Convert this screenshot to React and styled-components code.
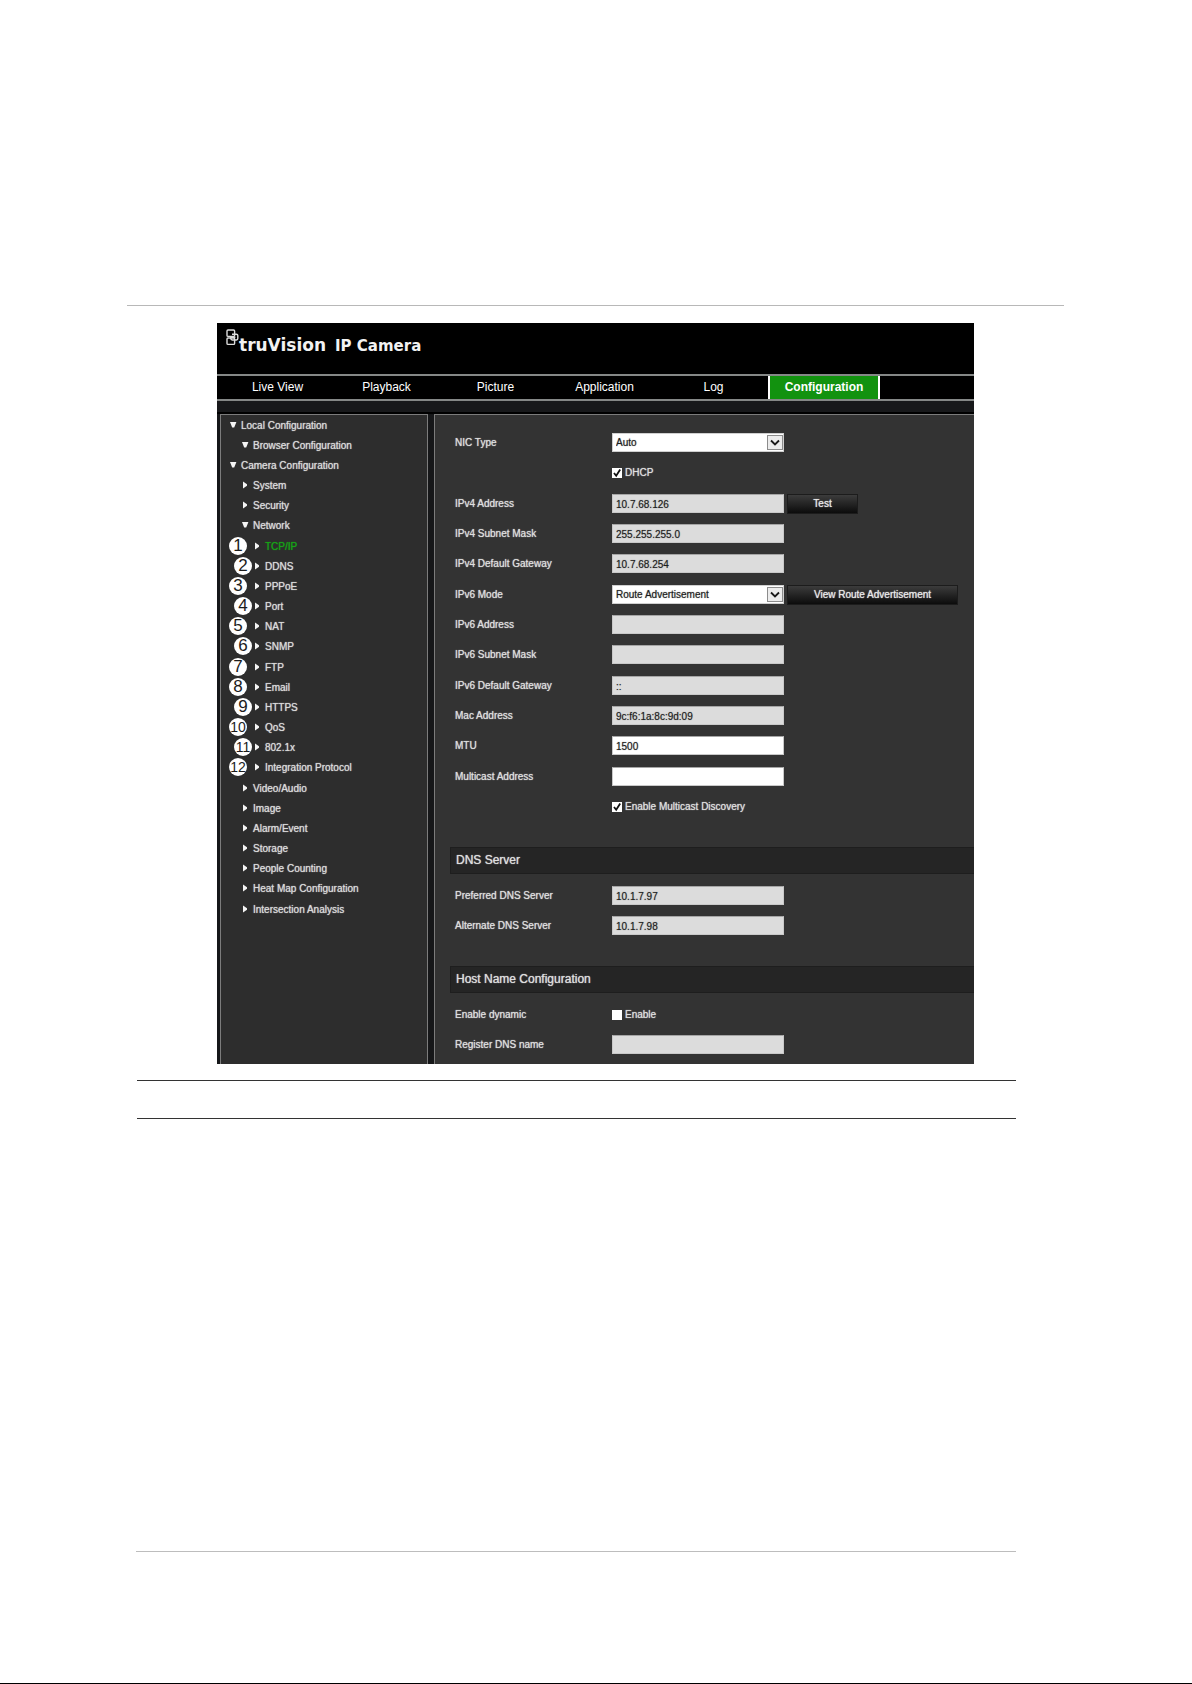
import React from 'react';
import styled, { createGlobalStyle } from 'styled-components';

const PANEL_BORDER = '#7c7c7c';
const NAV_LINE = '#858887';

const GlobalStyle = createGlobalStyle`
  body {
    margin: 0;
    background: #ffffff;
    font-family: 'Liberation Sans', Arial, sans-serif;
  }

  *, *::before, *::after {
    box-sizing: border-box;
  }
`;

const Page = styled.div`
  display: flex;
  flex-direction: column;
  min-height: 100vh;
  padding: 305px 128px 0 127px;
  border-bottom: 1px solid #000000;
`;

const TopRule = styled.hr`
  width: 100%;
  height: 1px;
  margin: 0 0 17px;
  border: 0;
  background: #b8b8b8;
`;

const CaptionRules = styled.div`
  height: 39px;
  margin: 16px 48px 0 10px;
  border-top: 1px solid #333333;
  border-bottom: 1px solid #333333;
`;

const FooterRule = styled.hr`
  width: calc(100% - 57px);
  height: 1px;
  margin: auto 48px 131px 9px;
  border: 0;
  background: #bdbdbd;
`;

const Window = styled.div`
  width: 100%;
  max-width: 757px;
  margin: 0 auto;
  background: #000000;
  color: #dedede;
`;

const Header = styled.header`
  display: flex;
  align-items: flex-start;
  height: 51px;
  padding: 6px 9px;
`;

const LogoMark = styled.svg`
  width: 13px;
  height: 17px;
  flex: none;
`;

const Brand = styled.div`
  display: flex;
  align-items: baseline;
  gap: 9px;
  padding-top: 6px;
  color: #f2f2f2;
  font-family: 'DejaVu Sans', sans-serif;
  font-weight: bold;
  line-height: 20px;
  white-space: nowrap;
`;

const BrandName = styled.span`
  font-size: 17px;
`;

const BrandProduct = styled.span`
  font-size: 15px;
`;

const Nav = styled.nav`
  display: flex;
  height: 27px;
  padding-left: 6px;
  border-top: 2px solid ${NAV_LINE};
  border-bottom: 2px solid ${NAV_LINE};
`;

const NavLink = styled.a`
  width: ${props => (props.$active ? '112px' : '109px')};
  border: solid #ffffff;
  border-width: ${props => (props.$active ? '0 2px' : '0')};
  background: ${props => (props.$active ? '#12920f' : 'transparent')};
  color: #ffffff;
  font-size: 12px;
  font-weight: ${props => (props.$active ? 'bold' : 'normal')};
  line-height: 23px;
  text-align: center;
  text-decoration: none;
`;

const Strip = styled.div`
  height: 11px;
  background: #18191b;
`;

const Body = styled.div`
  display: flex;
  gap: 6px;
  padding: 2px 0 0 3px;
  background: linear-gradient(#000000 2px, #161719 2px);
`;

const Sidebar = styled.aside`
  flex: 0 0 208px;
  border: 1px solid ${PANEL_BORDER};
  border-bottom: 0;
  background: #2d2d2d;
`;

const Tree = styled.ul`
  margin: 0;
  padding: 0;
  list-style: none;
`;

const TreeRow = styled.li`
  position: relative;
  height: 20px;
  padding-left: ${props => 9 + props.$level * 12}px;

  &:nth-child(6n) {
    height: 21px;
  }
`;

const TreeLink = styled.a`
  display: flex;
  align-items: center;
  gap: 4px;
  height: 20px;
  color: ${props => (props.$active ? '#17a317' : '#dadada')};
  font-size: 10px;
  text-decoration: none;
  text-shadow: 0 0 1px currentColor;
  white-space: nowrap;
`;

const Arrow = styled.svg`
  width: 7px;
  height: 8px;
  fill: #f4f4f4;
`;

const Badge = styled.span`
  position: absolute;
  top: 1px;
  left: ${props => (props.$shifted ? '13px' : '8px')};
  width: 18px;
  height: 18px;
  border-radius: 50%;
  background: #ffffff;
  color: #1c1c1c;
  font-size: ${props => (props.$small ? '14px' : '17px')};
  line-height: 18px;
  text-align: center;
`;

const Content = styled.main`
  flex: 1;
  min-width: 0;
  padding: 18px 0 0 15px;
  border: solid ${PANEL_BORDER};
  border-width: 1px 0 0 1px;
  background: #333333;
`;

const Rows = styled.div`
  display: flex;
  flex-direction: column;
  padding-left: 5px;
`;

const FieldRow = styled.div`
  display: grid;
  grid-template-columns: 157px 1fr;
  align-items: center;
  height: 19px;
  margin-bottom: 11px;
  font-size: 10px;
  text-shadow: 0 0 1px currentColor;

  &:nth-child(3n + 2) {
    margin-bottom: 12px;
  }

  &:last-child {
    margin-bottom: 10px;
  }
`;

const FieldBody = styled.div`
  display: flex;
  align-items: center;
  gap: 3px;
  height: 19px;
`;

const TextInput = styled.input`
  width: 172px;
  height: 19px;
  padding: 2px 3px 0;
  border: 1px solid #c9c9c9;
  border-top-color: #a5a5a5;
  border-radius: 0;
  background: ${props => (props.readOnly ? '#dcdcdc' : '#ffffff')};
  color: #1d1d1d;
  font: 10px 'Liberation Sans', Arial, sans-serif;
  text-shadow: 0 0 1px #777777;
  outline: 0;
`;

const SelectBox = styled.div`
  position: relative;
  width: 172px;
  height: 19px;
`;

const Select = styled.select`
  width: 100%;
  height: 19px;
  padding: 0 3px;
  border: 1px solid #d0d0d0;
  border-radius: 0;
  background: #ffffff;
  color: #1d1d1d;
  font: 10px 'Liberation Sans', Arial, sans-serif;
  text-shadow: 0 0 1px #777777;
  appearance: none;
`;

const SelectArrow = styled.svg`
  position: absolute;
  top: 2px;
  right: 1px;
  width: 16px;
  height: 16px;
  pointer-events: none;
`;

const CheckLabel = styled.label`
  display: flex;
  align-items: center;
  gap: 3px;
  height: 19px;
  white-space: nowrap;
`;

const CHECK_MARK =
  "url(\"data:image/svg+xml,%3Csvg xmlns='http://www.w3.org/2000/svg' viewBox='0 0 10 10'%3E%3Cpath d='M2 5l2.2 2.8L8.2 1.6' fill='none' stroke='%23111' stroke-width='1.8'/%3E%3C/svg%3E\")";

const Checkbox = styled.input`
  width: 10px;
  height: 10px;
  margin: 0;
  background: #ffffff;
  appearance: none;

  &:checked {
    background: #ffffff ${CHECK_MARK} center / 10px 10px no-repeat;
  }
`;

const Button = styled.button`
  width: ${props => (props.$wide ? '171px' : '71px')};
  height: 20px;
  padding: 0;
  border: 1px solid #1c1c1c;
  background: linear-gradient(#3c3c3c, #262626 45%, #0c0c0c);
  color: #e8e8e8;
  font: 10px 'Liberation Sans', Arial, sans-serif;
  text-shadow: 0 0 1px currentColor;
`;

const SectionTitle = styled.h2`
  height: 27px;
  margin: 21px 0 12px;
  padding-left: 5px;
  border: 1px solid #1e1e1e;
  border-right: 0;
  background: #252525;
  font-size: 12px;
  font-weight: normal;
  line-height: 25px;
  text-shadow: 0 0 1px currentColor;
`;

const navItems = ['Live View', 'Playback', 'Picture', 'Application', 'Log', 'Configuration'];

const treeItems = [
  { text: 'Local Configuration', level: 0, open: true },
  { text: 'Browser Configuration', level: 1, open: true },
  { text: 'Camera Configuration', level: 0, open: true },
  { text: 'System', level: 1 },
  { text: 'Security', level: 1 },
  { text: 'Network', level: 1, open: true },
  { text: 'TCP/IP', level: 2, badge: 1, active: true },
  { text: 'DDNS', level: 2, badge: 2, shifted: true },
  { text: 'PPPoE', level: 2, badge: 3 },
  { text: 'Port', level: 2, badge: 4, shifted: true },
  { text: 'NAT', level: 2, badge: 5 },
  { text: 'SNMP', level: 2, badge: 6, shifted: true },
  { text: 'FTP', level: 2, badge: 7 },
  { text: 'Email', level: 2, badge: 8 },
  { text: 'HTTPS', level: 2, badge: 9, shifted: true },
  { text: 'QoS', level: 2, badge: 10 },
  { text: '802.1x', level: 2, badge: 11, shifted: true },
  { text: 'Integration Protocol', level: 2, badge: 12 },
  { text: 'Video/Audio', level: 1 },
  { text: 'Image', level: 1 },
  { text: 'Alarm/Event', level: 1 },
  { text: 'Storage', level: 1 },
  { text: 'People Counting', level: 1 },
  { text: 'Heat Map Configuration', level: 1 },
  { text: 'Intersection Analysis', level: 1 }
];

function Logo() {
  return (
    <LogoMark viewBox="0 0 13 17" fill="none" stroke="#dcdcdc" strokeWidth="1.4" aria-hidden="true">
      <rect x="1" y="1" width="7.6" height="6.4" rx="1" />
      <rect x="1" y="9" width="7.6" height="6.4" rx="1" />
      <path d="M6 5.2h4.4q1.4 0 1.4 1.4v3q0 1.4-1.4 1.4H6.2q-1.4 0-1.4-1.4V8.2h4.6" />
    </LogoMark>
  );
}

function TreeItem({ item }) {
  return (
    <TreeRow $level={item.level}>
      {item.badge && (
        <Badge $shifted={item.shifted} $small={item.badge > 9}>
          {item.badge}
        </Badge>
      )}
      <TreeLink href="#" $active={item.active}>
        <Arrow viewBox="0 0 7 8" aria-hidden="true">
          <path d={item.open ? 'M0 1h6.4L4.2 6.6h-2z' : 'M1 0.4l4 2.8v1.6L1 7.6z'} />
        </Arrow>
        {item.text}
      </TreeLink>
    </TreeRow>
  );
}

function TextField({ id, label, value = '', locked, children }) {
  return (
    <FieldRow>
      <label htmlFor={id}>{label}</label>
      <FieldBody>
        <TextInput id={id} type="text" defaultValue={value} readOnly={locked} />
        {children}
      </FieldBody>
    </FieldRow>
  );
}

function SelectField({ id, label, value, children }) {
  return (
    <FieldRow>
      <label htmlFor={id}>{label}</label>
      <FieldBody>
        <SelectBox>
          <Select id={id} defaultValue={value}>
            <option>{value}</option>
          </Select>
          <SelectArrow viewBox="0 0 16 16" aria-hidden="true">
            <rect x="0.5" y="0.5" width="15" height="14" fill="#ececec" stroke="#8c8c8c" />
            <path d="M4 5.5l4 4 4-4" fill="none" stroke="#1a1a1a" strokeWidth="1.8" />
          </SelectArrow>
        </SelectBox>
        {children}
      </FieldBody>
    </FieldRow>
  );
}

function CheckField({ label, text, checked }) {
  return (
    <FieldRow>
      <span>{label}</span>
      <CheckLabel>
        <Checkbox type="checkbox" defaultChecked={checked} />
        {text}
      </CheckLabel>
    </FieldRow>
  );
}

function App() {
  return (
    <>
      <GlobalStyle />
      <Page>
        <TopRule />
        <Window>
          <Header>
            <Logo />
            <Brand>
              <BrandName>truVision</BrandName>
              <BrandProduct>IP Camera</BrandProduct>
            </Brand>
          </Header>
          <Nav>
            {navItems.map(name => (
              <NavLink key={name} href="#" $active={name === 'Configuration'}>
                {name}
              </NavLink>
            ))}
          </Nav>
          <Strip />
          <Body>
            <Sidebar>
              <Tree>
                {treeItems.map(item => (
                  <TreeItem key={item.text} item={item} />
                ))}
              </Tree>
            </Sidebar>
            <Content>
              <Rows>
                <SelectField id="nic" label="NIC Type" value="Auto" />
                <CheckField text="DHCP" checked />
                <TextField id="ip4" label="IPv4 Address" value="10.7.68.126" locked>
                  <Button type="button">Test</Button>
                </TextField>
                <TextField id="mask4" label="IPv4 Subnet Mask" value="255.255.255.0" locked />
                <TextField id="gate4" label="IPv4 Default Gateway" value="10.7.68.254" locked />
                <SelectField id="mode6" label="IPv6 Mode" value="Route Advertisement">
                  <Button type="button" $wide>View Route Advertisement</Button>
                </SelectField>
                <TextField id="ip6" label="IPv6 Address" locked />
                <TextField id="mask6" label="IPv6 Subnet Mask" locked />
                <TextField id="gate6" label="IPv6 Default Gateway" value="::" locked />
                <TextField id="mac" label="Mac Address" value="9c:f6:1a:8c:9d:09" locked />
                <TextField id="mtu" label="MTU" value="1500" />
                <TextField id="multicast" label="Multicast Address" />
                <CheckField text="Enable Multicast Discovery" checked />
              </Rows>
              <SectionTitle>DNS Server</SectionTitle>
              <Rows>
                <TextField id="dns1" label="Preferred DNS Server" value="10.1.7.97" locked />
                <TextField id="dns2" label="Alternate DNS Server" value="10.1.7.98" locked />
              </Rows>
              <SectionTitle>Host Name Configuration</SectionTitle>
              <Rows>
                <CheckField label="Enable dynamic" text="Enable" />
                <TextField id="dnsname" label="Register DNS name" locked />
              </Rows>
            </Content>
          </Body>
        </Window>
        <CaptionRules />
        <FooterRule />
      </Page>
    </>
  );
}

export default App;
